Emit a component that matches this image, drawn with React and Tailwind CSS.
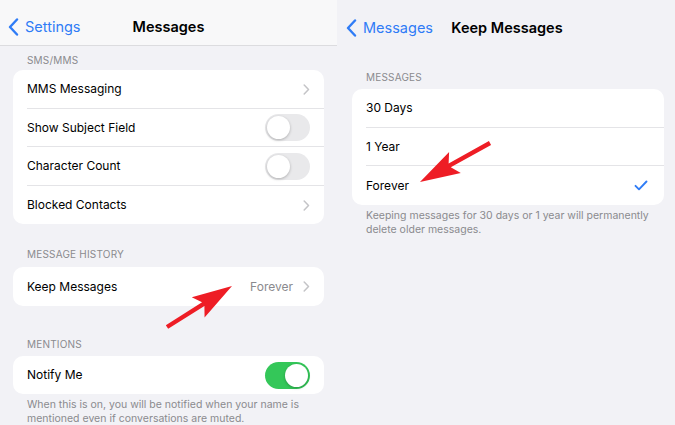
import React from "react";

const font = { fontFamily: "Inter, 'Noto Sans', sans-serif" };

function Chevron() {
  return (
    <svg width="7" height="11" viewBox="0 0 7 11" className="shrink-0">
      <path d="M1.2 1 L5.5 5.5 L1.2 10" fill="none" stroke="#c4c4c7" strokeWidth="1.5" strokeLinecap="round" strokeLinejoin="round" />
    </svg>
  );
}

function BackChevron() {
  return (
    <svg width="11" height="18" viewBox="0 0 11 18" className="shrink-0">
      <path d="M9 1.5 L2 9 L9 16.5" fill="none" stroke="#2f7cf6" strokeWidth="2.4" strokeLinecap="round" strokeLinejoin="round" />
    </svg>
  );
}

function Toggle({ on }) {
  return (
    <div className={`relative w-[45px] h-[27px] rounded-full ${on ? "bg-[#34c759]" : "bg-[#e9e9eb]"}`}>
      <div className={`absolute top-[2px] ${on ? "right-[2px]" : "left-[2px]"} w-[23px] h-[23px] rounded-full bg-white shadow-[0_1px_3px_rgba(0,0,0,0.25)]`} />
    </div>
  );
}

function Row({ label, right, last }) {
  return (
    <div className="flex h-[38.5px] items-center pl-[14px]">
      <div className={`flex h-full flex-1 items-center justify-between pr-[14px] pt-[1px] ${last ? "" : "border-b border-[#e4e4e7]"}`}>
        <span className="text-[12px] text-black">{label}</span>
        {right}
      </div>
    </div>
  );
}

function Label({ children, className = "" }) {
  return <div className={`pl-[27px] text-[10px] tracking-[0.02em] text-[#8a8a8e] ${className}`}>{children}</div>;
}

function Card({ children, className = "" }) {
  return <div className={`mx-[13px] overflow-hidden rounded-[10px] bg-white ${className}`}>{children}</div>;
}

function Arrow({ tail, tip }) {
  const [x1, y1] = tail;
  const [x2, y2] = tip;
  const dx = x2 - x1, dy = y2 - y1;
  const len = Math.hypot(dx, dy);
  const ux = dx / len, uy = dy / len;
  const px = -uy, py = ux;
  const headLen = 40, headW = 12, shaft = 2.2;
  const bx = x2 - ux * headLen, by = y2 - uy * headLen;
  const bx2 = x2 - ux * (headLen - 6), by2 = y2 - uy * (headLen - 6);
  const pts = [
    [x1 + px * shaft, y1 + py * shaft],
    [bx2 + px * shaft, by2 + py * shaft],
    [bx + px * headW, by + py * headW],
    [x2, y2],
    [bx - px * headW, by - py * headW],
    [bx2 - px * shaft, by2 - py * shaft],
    [x1 - px * shaft, y1 - py * shaft],
  ];
  return <polygon points={pts.map((p) => p.join(",")).join(" ")} fill="#ee1d25" />;
}

export default function App() {
  return (
    <div style={font} className="relative w-[675px] h-[425px] overflow-hidden bg-[#f2f2f6]">
      <div className="grid h-full grid-cols-[337px_338px]">
        {/* Left panel */}
        <div className="flex flex-col">
          <div className="relative flex h-[46px] items-center border-b border-[#dcdcdf] bg-[#f8f8f9] px-[8px] pt-[9px]">
            <div className="flex items-center gap-[6px]">
              <BackChevron />
              <span className="text-[14.5px] text-[#2f7cf6]">Settings</span>
            </div>
            <span className="absolute left-0 right-0 text-center text-[14.5px] font-semibold text-black pointer-events-none">Messages</span>
          </div>
          <Label className="mt-[5px] h-[18px] leading-[18px]">SMS/MMS</Label>
          <Card className="mt-[1px]">
            <Row label="MMS Messaging" right={<Chevron />} />
            <Row label="Show Subject Field" right={<Toggle />} />
            <Row label="Character Count" right={<Toggle />} />
            <Row label="Blocked Contacts" right={<Chevron />} last />
          </Card>
          <Label className="mt-[21px] h-[18px] leading-[18px]">MESSAGE HISTORY</Label>
          <Card className="mt-[4px]">
            <Row
              label="Keep Messages"
              last
              right={
                <div className="flex items-center gap-[10px]">
                  <span className="text-[12px] text-[#8a8a8e]">Forever</span>
                  <Chevron />
                </div>
              }
            />
          </Card>
          <Label className="mt-[29px] h-[18px] leading-[18px]">MENTIONS</Label>
          <Card className="mt-[3px]">
            <Row label="Notify Me" right={<Toggle on />} last />
          </Card>
          <div className="mt-[4px] pl-[27px] pr-[20px] text-[10.5px] leading-[14px] text-[#8a8a8e]">
            When this is on, you will be notified when your name is mentioned even if conversations are muted.
          </div>
        </div>

        {/* Right panel */}
        <div className="flex flex-col">
          <div className="relative flex h-[46px] items-center px-[9px] pt-[9px]">
            <div className="flex items-center gap-[6px]">
              <BackChevron />
              <span className="text-[14.5px] text-[#2f7cf6]">Messages</span>
            </div>
            <span className="absolute left-[2px] right-0 text-center text-[14.5px] font-semibold text-black pointer-events-none">Keep Messages</span>
          </div>
          <Label className="mt-[22px] h-[18px] leading-[18px] pl-[29px]">MESSAGES</Label>
          <div className="ml-[15px] mr-[11px] mt-[3px] overflow-hidden rounded-[10px] bg-white">
            <Row label="30 Days" />
            <Row label="1 Year" />
            <Row
              label="Forever"
              last
              right={
                <svg width="14" height="11" viewBox="0 0 14 11" className="mr-[2px]">
                  <path d="M1.5 5.8 L5 9.3 L12.5 1.5" fill="none" stroke="#2f7cf6" strokeWidth="1.9" strokeLinecap="round" strokeLinejoin="round" />
                </svg>
              }
            />
          </div>
          <div className="mt-[4px] pl-[29px] pr-[15px] text-[10.5px] leading-[14px] text-[#8a8a8e]">
            Keeping messages for 30 days or 1 year will permanently delete older messages.
          </div>
        </div>
      </div>

      <svg className="pointer-events-none absolute inset-0" width="675" height="425">
        <Arrow tail={[167, 327]} tip={[232, 286]} />
        <Arrow tail={[490, 143]} tip={[420, 182]} />
      </svg>
    </div>
  );
}
